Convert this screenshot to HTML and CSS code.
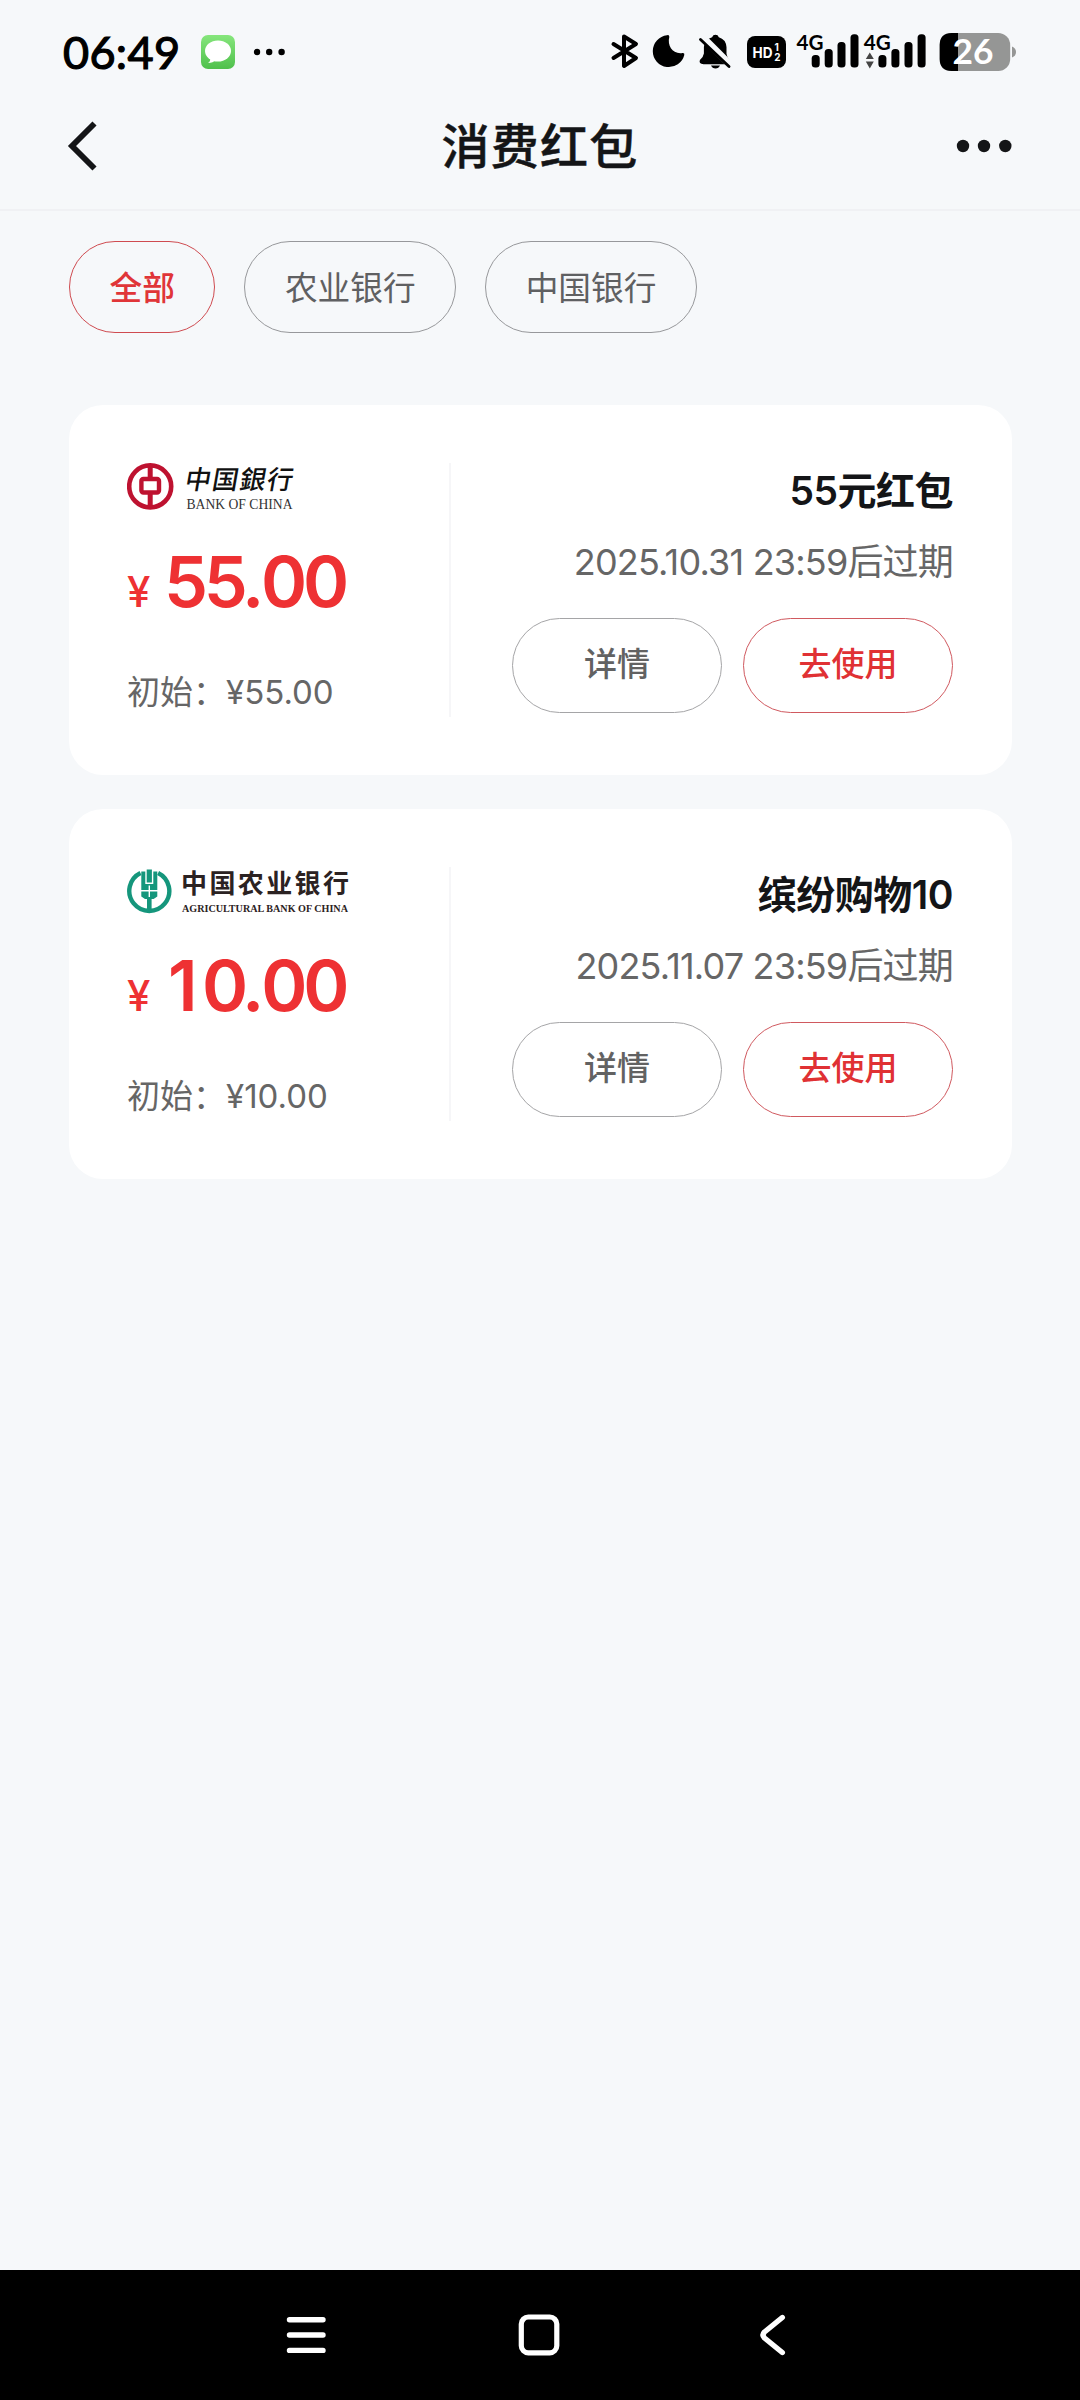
FILE: index.html
```html
<!DOCTYPE html>
<html lang="zh-CN">
<head>
<meta charset="utf-8">
<title>消费红包</title>
<link rel="stylesheet" href="styles.css">
</head>
<body>
<div class="screen">
  <div class="status">
    <svg class="status-left" width="240" height="60" viewBox="60 20 240 60">
      <defs><linearGradient id="msg" x1="0" y1="0" x2="0" y2="1"><stop offset="0" stop-color="#86e67c"/><stop offset="1" stop-color="#4fc04c"/></linearGradient></defs>
      <text class="clock" x="63" y="69" textLength="117">06:49</text>
      <rect x="201" y="35" width="34" height="34" rx="7" fill="url(#msg)"/>
      <ellipse cx="218" cy="51" rx="13" ry="10.5" fill="#fff"/>
      <path d="M210 58q1 3-2 5q5 0 8-3z" fill="#fff"/>
      <circle cx="257" cy="52" r="3.2"/><circle cx="269.2" cy="52" r="3.2"/><circle cx="281.6" cy="52" r="3.2"/>
    </svg>
    <svg class="status-right" width="420" height="60" viewBox="600 20 420 60">
      <path d="M613.500 44L636 58L624 66V36.500L636 44L613.500 58" fill="none" stroke="#000" stroke-width="4" stroke-linecap="round" stroke-linejoin="round"/>
      <path d="M667 35.200Q669.500 34.600 669.300 37C667 46 673 54.500 682.500 53Q684.800 52.800 684.300 55A16 16 0 1 1 667 35.200Z"/>
      <path d="M715.500 34.800q2.500 0 3.300 2.400q7.200 2 7.700 10v6.500q.3 3 3 6.500q1.500 3.800-2 4h-24q-5-.2-3.600-4.200q3.700-3.500 4-6.500v-6.500q.6-7.600 8.200-9.800q.8-2.400 3.400-2.400zM711 65.500h9q-1.300 2.900-4.500 2.900t-4.500-2.900z"/>
      <path d="M702.500 37L731 65.500" stroke="#f6f8fa" stroke-width="7"/>
      <path d="M700.500 39.500L729 66.500" stroke="#000" stroke-width="2.900" stroke-linecap="round"/>
      <rect x="747" y="36" width="39" height="32" rx="8"/>
      <text class="hd" x="752.500" y="57.500" textLength="20" lengthAdjust="spacingAndGlyphs">HD</text><text class="hd-small" x="774.500" y="51">1</text><text class="hd-small" x="774.300" y="60.500">2</text>
      <text class="net" x="796.500" y="50" textLength="27" lengthAdjust="spacingAndGlyphs">4G</text>
      <rect x="811.700" y="55" width="8" height="12.500" rx="3.500"/><rect x="824.700" y="49" width="8" height="18.500" rx="3.500"/><rect x="837.500" y="42" width="8" height="25.500" rx="3.500"/><rect x="850.500" y="34.200" width="8" height="33.300" rx="3.500"/>
      <text class="net" x="863.800" y="50" textLength="27" lengthAdjust="spacingAndGlyphs">4G</text>
      <path d="M869.800 52.500l4 6.500h-8zM865.800 61.500h8l-4 7z" fill="#444"/>
      <rect x="878.400" y="55" width="8" height="12.500" rx="3.500"/><rect x="891.400" y="49" width="8" height="18.500" rx="3.500"/><rect x="904.500" y="42" width="8" height="25.500" rx="3.500"/><rect x="917.600" y="34.200" width="8" height="33.300" rx="3.500"/>
      <rect x="939.700" y="33" width="70.500" height="38" rx="12" fill="#959695"/>
      <path d="M958 33h-6.300q-12 0-12 12v14q0 12 12 12h6.300z"/>
      <path d="M1012 46.500q4 1.500 4 5.500t-4 5.500z" fill="#959695"/>
      <text class="battery" x="952.500" y="64" textLength="41" lengthAdjust="spacingAndGlyphs">26</text>
    </svg>
  </div>

  <header class="header">
    <svg width="40" height="60" viewBox="60 116 40 60"><path d="M94.500 123.500L72 146L94.500 168.500" fill="none" stroke="#141517" stroke-width="5.800"/></svg>
    <h1 class="title">消费红包</h1>
    <svg width="60" height="30" viewBox="954 131 60 30" fill="#141517"><circle cx="963" cy="146" r="6.200"/><circle cx="984" cy="146" r="6.200"/><circle cx="1005.300" cy="146" r="6.200"/></svg>
  </header>

  <nav class="tabs">
    <span class="tab tab-active">全部</span>
    <span class="tab">农业银行</span>
    <span class="tab">中国银行</span>
  </nav>

  <main class="list">
    <section class="card">
      <div class="amount">
        <svg class="logo" width="230" height="68" viewBox="127 453 230 68">
          <circle cx="150.200" cy="486.400" r="21" fill="none" stroke="#be1230" stroke-width="4.600"/>
          <path d="M150.200 464v14M150.200 494v15" stroke="#be1230" stroke-width="5"/>
          <rect x="141.400" y="479" width="17.600" height="13.500" rx="2" fill="none" stroke="#be1230" stroke-width="4.400"/>
          <text class="boc-cn" x="184" y="489" textLength="108" transform="translate(86 0) skewX(-10)">中国銀行</text>
          <text class="boc-en" x="186.500" y="508.700" textLength="106" lengthAdjust="spacingAndGlyphs">BANK OF CHINA</text>
        </svg>
        <div class="price"><span class="yen">¥</span><span class="value">55<span class="dot">.</span>00</span></div>
        <div class="initial">初始：¥55.00</div>
      </div>
      <div class="detail">
        <h2 class="name">55元红包</h2>
        <div class="expiry">2025.10.31 23:59后过期</div>
        <div class="actions"><button class="btn">详情</button><button class="btn btn-use">去使用</button></div>
      </div>
    </section>

    <section class="card">
      <div class="amount">
        <svg class="logo" width="230" height="68" viewBox="127 857 230 68">
          <path d="M140.500 873A20 20 0 1 0 158.100 873" fill="none" stroke="#15967c" stroke-width="4.400"/>
          <path d="M146.700 869.500h5.200v13h-5.200zM141.300 871.500h4v12.500h8v-12.500h4v18.500h-7.300v-4.500h-1.400v4.500h-7.300zM141.300 891.500h7.300v7.500h-3.600l-3.700-2.500zM150 891.500h7.300v5l-3.700 2.500h-3.600z" fill="#15967c"/>
          <path d="M149.300 897v14" stroke="#15967c" stroke-width="4.600"/>
          <text class="abc-cn" x="181" y="892.500" textLength="168">中国农业银行</text>
          <text class="abc-en" x="182" y="912" textLength="166" lengthAdjust="spacingAndGlyphs">AGRICULTURAL BANK OF CHINA</text>
        </svg>
        <div class="price"><span class="yen">¥</span><span class="value"><span class="one">1</span>0<span class="dot">.</span>00</span></div>
        <div class="initial">初始：¥10.00</div>
      </div>
      <div class="detail">
        <h2 class="name">缤纷购物10</h2>
        <div class="expiry">2025.11.07 23:59后过期</div>
        <div class="actions"><button class="btn">详情</button><button class="btn btn-use">去使用</button></div>
      </div>
    </section>
  </main>

  <footer class="navbar">
    <svg width="1080" height="130" viewBox="0 2270 1080 130" fill="none" stroke="#fff" stroke-linecap="round" stroke-linejoin="round">
      <path d="M289.500 2319.700h33.500M289.500 2335h33.500M289.500 2350.400h33.500" stroke-width="5.400"/>
      <rect x="521.300" y="2317" width="35.500" height="35.800" rx="7" stroke-width="5.200"/>
      <path d="M782.300 2317.500L764.500 2332Q761.500 2335 764.500 2338L782.300 2352.500" stroke-width="5.400"/>
    </svg>
  </footer>
</div>
</body>
</html>
```

FILE: styles.css
```css
* { box-sizing: border-box; margin: 0; padding: 0; }
body { width: 1080px; background: #f6f8fa; }
.screen {
  display: flex;
  flex-direction: column;
  height: 2400px;
  font-family: Inter, "Noto Sans CJK SC", sans-serif;
  color: #141517;
}
.status {
  display: flex;
  justify-content: space-between;
  height: 80px;
  padding: 20px 60px 0;
}
.clock { font: 400 45px Lato, sans-serif; stroke: #000; stroke-width: 1.2px; }
.hd { font: 700 15px Inter, sans-serif; fill: #fff; }
.hd-small { font: 700 10px Inter, sans-serif; fill: #fff; }
.net { font: 700 21px Lato, sans-serif; }
.battery { font: 700 34px Lato, sans-serif; fill: #fff; }

.header {
  display: flex;
  align-items: center;
  justify-content: space-between;
  height: 131px;
  padding: 3px 66px 0 60px;
  border-bottom: 2px solid #f0f1f4;
}
.title { font-size: 48px; font-weight: 500; letter-spacing: 1.2px; line-height: 60px; padding: 2px 0 0 26px; -webkit-text-stroke: .5px #141517; }

.tabs { display: flex; gap: 29px; padding: 30px 69px 0; height: 194px; }
.tab {
  height: 92px;
  padding: 1px 39.500px 0;
  border: 1px solid #97989b;
  border-radius: 46px;
  font-size: 32.700px;
  line-height: 91px;
  color: #5f6062;
}
.tab-active { border-color: #cf4b50; color: #e03538; font-weight: 500; }

.list { display: flex; flex-direction: column; gap: 34px; padding: 0 68px 0 69px; flex: 1; }
.card { display: flex; height: 370px; padding: 58px 59px 52px 58px; border-radius: 34px; background: #fff; }
.amount { width: 324px; height: 254px; border-right: 2px solid #f6f6f8; }
.logo { display: block; margin: -10px 0; }
.price { display: flex; align-items: baseline; height: 72px; margin-top: 35px; line-height: 72px; font-weight: 600; color: #ee3133; }
.yen { width: 37px; font-size: 42px; font-weight: 500; }
.value { font-size: 70px; letter-spacing: -4.200px; }
.dot { margin: 0 1px 0 0; }
.one { display: inline-block; width: 38px; padding-left: 4px; }
.initial { margin-top: 54px; font-size: 33px; line-height: 40px; color: #666; }
.detail { display: flex; flex-direction: column; align-items: flex-end; flex: 1; }
.name { margin-top: 4px; font-size: 39px; font-weight: 600; line-height: 48px; letter-spacing: -.500px; }
.expiry { margin-top: 25px; font-size: 36px; line-height: 44px; color: #666; white-space: nowrap; letter-spacing: -.800px; }
.actions { display: flex; gap: 21px; margin-top: 34px; }
.btn {
  width: 210px;
  height: 95px;
  padding-bottom: 7px;
  border: 1px solid #a5a5a7;
  border-radius: 48px;
  background: none;
  font: 500 33px Inter, "Noto Sans CJK SC", sans-serif;
  color: #626262;
}
.btn-use { border-color: #d0595f; color: #e03134; }

.boc-cn { font: 500 26px "Noto Sans CJK TC", sans-serif; fill: #111; }
.boc-en { font: 14px "Liberation Serif", serif; fill: #333; }
.abc-cn { font: 700 26px "Noto Sans CJK SC", sans-serif; fill: #2b2222; }
.abc-en { font: 700 10px "Liberation Serif", serif; fill: #2b2222; }

.navbar { height: 130px; background: #000; }
.navbar svg { display: block; }
```
